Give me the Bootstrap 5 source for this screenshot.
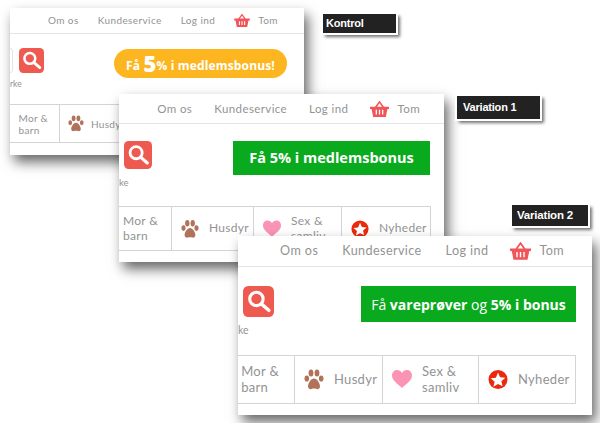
<!DOCTYPE html>
<html lang="da">
<head>
    <meta charset="UTF-8">
    <meta name="viewport" content="width=device-width, initial-scale=1">
    <title>Kontrol og variationer</title>
    <link href="https://cdn.jsdelivr.net/npm/bootstrap@5.3.0/dist/css/bootstrap.min.css" rel="stylesheet">
    <style>
        body { background: #fff; width: 600px; height: 423px; overflow: hidden; position: relative; font-family: Lato, "Open Sans", sans-serif; color: #939393; }

        .shot { position: absolute; background: #fff; overflow: hidden; box-shadow: 4px 7px 12px rgba(0,0,0,.6); }
        .shot-a { left: 10px; top: 8px; width: 294px; height: 147px; font-size: 10px; }
        .shot-b { left: 119px; top: 94px; width: 325px; height: 168px; font-size: 11.5px; }
        .shot-c { left: 238px; top: 236px; width: 354px; height: 179px; font-size: 12.6px; }

        .shot-top { border-bottom: 1px solid #e4e4e4; letter-spacing: .4px; }
        .shot-a .shot-top { height: 26px; padding-right: 26px; gap: 19px; }
        .shot-b .shot-top { height: 30px; padding-right: 24px; gap: 22px; }
        .shot-c .shot-top { height: 31px; padding-right: 28px; gap: 24px; }
        .cart { gap: 8px; }
        .shot-c .cart { margin-left: -2px; }
        .shot-a .cart svg { width: 16px; height: 13px; }
        .shot-b .cart svg { width: 19px; height: 16px; }
        .shot-c .cart svg { width: 21px; height: 18px; }

        .shot-mid { position: relative; }
        .shot-a .shot-mid { height: 70px; padding: 14px 17px 0 9px; }
        .shot-b .shot-mid { height: 82px; padding: 17px 14px 0 5px; }
        .shot-c .shot-mid { height: 88px; padding: 19px 16px 0 5px; }

        .find-btn { display: block; }
        .shot-a .find-btn { width: 25px; height: 25px; }
        .shot-b .find-btn { width: 28px; height: 28px; }
        .shot-c .find-btn { width: 31px; height: 31px; }
        .find-note { white-space: nowrap; }
        .shot-a .find-note { margin: 5px 0 0 -9px; font-size: 8.5px; }
        .shot-b .find-note { margin: 7px 0 0 -5px; font-size: 9.5px; }
        .shot-c .find-note { margin: 6px 0 0 -5px; font-size: 10.5px; }
        .field-edge { position: absolute; left: -6px; top: 14px; width: 9px; height: 25px; border: 1px solid #e3e3e3; border-radius: 3px; }

        .promo { color: #fff; font-family: "Open Sans", sans-serif; font-weight: 700; white-space: nowrap; display: flex; align-items: center; justify-content: center; }
        .promo-pill { width: 173px; height: 29px; margin-top: 1px; background: #fdb61f; border-radius: 15px; font-size: 12px; letter-spacing: .15px; }
        .promo-pill b { font-size: 22px; line-height: 1; font-weight: 800; vertical-align: -2px; }
        .promo-box { background: #0aaa1e; }
        .shot-b .promo-box { width: 197px; height: 34px; font-size: 14.5px; }
        .shot-c .promo-box { width: 215px; height: 36px; font-size: 14px; }
        .promo-box .thin { font-weight: 400; }

        .cats { justify-content: flex-end; }
        .shot-a .cats { height: 39px; padding-right: 17px; }
        .shot-b .cats { height: 45px; padding-right: 13px; }
        .shot-c .cats { height: 49px; padding-right: 16px; }
        .cat { flex: 0 0 auto; display: flex; align-items: center; border: 1px solid #d4d4d4; border-left: 0; line-height: 1.2; letter-spacing: .3px; }
        .shot-a .cat { gap: 7px; padding-left: 8px; }
        .shot-b .cat { gap: 10px; padding-left: 9px; font-size: 12px; }
        .shot-c .cat { gap: 10px; padding-left: 9px; font-size: 13px; }
        .cat-first { justify-content: flex-end; }
        .shot-a .cat-first { width: 80px; padding-right: 11px; }
        .shot-b .cat-first { width: 90px; padding-right: 13px; }
        .shot-c .cat-first { width: 90px; padding-right: 15px; }
        .shot-a .cat-2 { width: 79px; }
        .shot-a .cat-3 { width: 70px; }
        .shot-a .cat-4 { width: 78px; }
        .shot-b .cat-2 { width: 82px; }
        .shot-b .cat-3 { width: 88px; }
        .shot-b .cat-4 { width: 89px; }
        .shot-c .cat-2 { width: 88px; }
        .shot-c .cat-3 { width: 96px; }
        .shot-c .cat-4 { width: 97px; }
        .shot-a .cat svg { width: 16px; height: 17px; flex: none; }
        .shot-b .cat svg { width: 18px; height: 20px; flex: none; }
        .shot-c .cat svg { width: 20px; height: 21px; flex: none; }

        .tag { position: absolute; background: #222; color: #fff; font-family: "Liberation Sans", sans-serif; font-weight: 700; line-height: 1; display: flex; align-items: center; letter-spacing: -.2px; box-shadow: 0 0 0 2px #fff, 3px 3px 3px 1px rgba(0,0,0,.55); }
        .tag-a { left: 323px; top: 14px; width: 73px; height: 19px; font-size: 11px; padding-left: 3px; }
        .tag-b { left: 457px; top: 96px; width: 83px; height: 23px; font-size: 11px; padding-left: 6px; }
        .tag-c { left: 512px; top: 205px; width: 76px; height: 21px; font-size: 11.5px; padding-left: 5px; }
    </style>
</head>
<body>
    <svg width="0" height="0" class="position-absolute">
        <defs>
            <symbol id="ico-basket" viewBox="0 0 24 20">
                <path d="M7 8 12 1l5 7" fill="none" stroke="#f0555a" stroke-width="2"/>
                <path d="M0 7h24v3h-2l-2 10H4L2 10H0z" fill="#f0555a"/>
                <path d="M8 11v6M12 11v6M16 11v6" stroke="#fff" stroke-width="1.6"/>
            </symbol>
            <symbol id="ico-find" viewBox="0 0 30 30">
                <rect width="30" height="30" rx="5" fill="#ef5a50"/>
                <circle cx="13" cy="12.5" r="6.5" fill="none" stroke="#fff" stroke-width="3"/>
                <path d="M18 17.5l7 6" stroke="#fff" stroke-width="3.4" stroke-linecap="round"/>
            </symbol>
            <symbol id="ico-paw" viewBox="0 0 20 21">
                <ellipse cx="2.8" cy="9.5" rx="2.3" ry="3.1" fill="#b0735a"/>
                <ellipse cx="7" cy="4" rx="2.4" ry="3.6" fill="#b0735a"/>
                <ellipse cx="13" cy="4" rx="2.4" ry="3.6" fill="#b0735a"/>
                <ellipse cx="17.2" cy="9.5" rx="2.3" ry="3.1" fill="#b0735a"/>
                <path d="M10 9.5c3 0 6 4.500 6 8 0 2.500-2.500 3-3.500 2.500-1.500-.6-3.500-.6-5 0C6.500 20.500 4 20 4 17.500c0-3.500 3-8 6-8z" fill="#b0735a"/>
            </symbol>
            <symbol id="ico-heart" viewBox="0 0 20 21">
                <path d="M10 19C5 14.500 0 11 0 6.500 0 3 2.500 1 5 1c2.200 0 4 1.200 5 3 1-1.800 2.800-3 5-3 2.500 0 5 2 5 5.500C20 11 15 14.500 10 19z" fill="#fb93b4"/>
            </symbol>
            <symbol id="ico-star" viewBox="0 0 20 21">
                <circle cx="10" cy="10.500" r="9.500" fill="#ea2a0c"/>
                <path d="M10 3.500l2.100 4.800 5.200.5-3.900 3.400 1.200 5.100L10 15.100 5.400 17.800l1.200-5.100-3.900-3.400 5.200-.5z" fill="#fff"/>
            </symbol>
        </defs>
    </svg>

    <div class="shot shot-a">
        <div class="shot-top d-flex justify-content-end align-items-center">
            <span>Om os</span><span>Kundeservice</span><span>Log ind</span>
            <span class="cart d-flex align-items-center"><svg><use href="#ico-basket"/></svg>Tom</span>
        </div>
        <div class="shot-mid d-flex justify-content-between">
            <div class="field-edge"></div>
            <div>
                <svg class="find-btn"><use href="#ico-find"/></svg>
                <div class="find-note">rke</div>
            </div>
            <div class="promo promo-pill"><span>Få <b>5</b>% i medlemsbonus!</span></div>
        </div>
        <div class="cats d-flex">
            <div class="cat cat-first"><span>Mor &amp;<br>barn</span></div>
            <div class="cat cat-2"><svg><use href="#ico-paw"/></svg><span>Husdyr</span></div>
            <div class="cat cat-3"><svg><use href="#ico-heart"/></svg><span>Sex &amp;<br>samliv</span></div>
            <div class="cat cat-4"><svg><use href="#ico-star"/></svg><span>Nyheder</span></div>
        </div>
    </div>
    <div class="tag tag-a">Kontrol</div>

    <div class="shot shot-b">
        <div class="shot-top d-flex justify-content-end align-items-center">
            <span>Om os</span><span>Kundeservice</span><span>Log ind</span>
            <span class="cart d-flex align-items-center"><svg><use href="#ico-basket"/></svg>Tom</span>
        </div>
        <div class="shot-mid d-flex justify-content-between">
            <div>
                <svg class="find-btn"><use href="#ico-find"/></svg>
                <div class="find-note">ke</div>
            </div>
            <div class="promo promo-box">Få 5% i medlemsbonus</div>
        </div>
        <div class="cats d-flex">
            <div class="cat cat-first"><span>Mor &amp;<br>barn</span></div>
            <div class="cat cat-2"><svg><use href="#ico-paw"/></svg><span>Husdyr</span></div>
            <div class="cat cat-3"><svg><use href="#ico-heart"/></svg><span>Sex &amp;<br>samliv</span></div>
            <div class="cat cat-4"><svg><use href="#ico-star"/></svg><span>Nyheder</span></div>
        </div>
    </div>
    <div class="tag tag-b">Variation 1</div>

    <div class="shot shot-c">
        <div class="shot-top d-flex justify-content-end align-items-center">
            <span>Om os</span><span>Kundeservice</span><span>Log ind</span>
            <span class="cart d-flex align-items-center"><svg><use href="#ico-basket"/></svg>Tom</span>
        </div>
        <div class="shot-mid d-flex justify-content-between">
            <div>
                <svg class="find-btn"><use href="#ico-find"/></svg>
                <div class="find-note">ke</div>
            </div>
            <div class="promo promo-box"><span><span class="thin">Få</span> vareprøver <span class="thin">og</span> 5% i bonus</span></div>
        </div>
        <div class="cats d-flex">
            <div class="cat cat-first"><span>Mor &amp;<br>barn</span></div>
            <div class="cat cat-2"><svg><use href="#ico-paw"/></svg><span>Husdyr</span></div>
            <div class="cat cat-3"><svg><use href="#ico-heart"/></svg><span>Sex &amp;<br>samliv</span></div>
            <div class="cat cat-4"><svg><use href="#ico-star"/></svg><span>Nyheder</span></div>
        </div>
    </div>
    <div class="tag tag-c">Variation 2</div>

    <script src="https://cdn.jsdelivr.net/npm/bootstrap@5.3.0/dist/js/bootstrap.bundle.min.js"></script>
</body>
</html>
